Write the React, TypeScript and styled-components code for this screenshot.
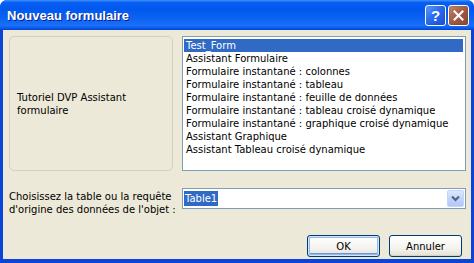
import React from "react";
import styled, { createGlobalStyle } from "styled-components";

const GlobalStyle = createGlobalStyle`
  html, body {
    margin: 0;
    padding: 0;
    background: #ffffff;
  }
  body {
    font-family: "DejaVu Sans", Verdana, sans-serif;
    font-size: 10px;
    color: #000;
  }
`;

const Window = styled.div`
  width: 474px;
  height: 263px;
  display: flex;
  flex-direction: column;
  background: #0a44d8;
  border-radius: 7px 7px 0 0;
  overflow: hidden;
  box-sizing: border-box;
`;

const TitleBar = styled.div`
  height: 30px;
  flex: none;
  display: flex;
  align-items: center;
  justify-content: space-between;
  padding: 0 5px 0 7px;
  background: linear-gradient(
    to bottom,
    #3d95ff 0%,
    #0a5ff4 8%,
    #0058ee 30%,
    #0a63f2 60%,
    #1a6ff8 85%,
    #0a5ae8 94%,
    #0340cf 100%
  );
`;

const Title = styled.span`
  font-family: "Liberation Sans", Arial, sans-serif;
  font-weight: bold;
  font-size: 13px;
  color: #ffffff;
  text-shadow: 1px 1px 0 #0a1e8a;
  margin-top: 1px;
`;

const Caption = styled.div`
  display: flex;
  gap: 2px;
  margin-top: 1px;
`;

const CaptionButton = styled.div<{ $tone: "help" | "close" }>`
  width: 19px;
  height: 19px;
  border: 1px solid #ffffff;
  border-radius: 3px;
  display: flex;
  align-items: center;
  justify-content: center;
  color: #ffffff;
  font-family: "Liberation Sans", Arial, sans-serif;
  font-weight: bold;
  font-size: 15px;
  background: ${(p) =>
    p.$tone === "help"
      ? "linear-gradient(135deg, #5f9cfb 0%, #2a6cf0 45%, #1a4fd8 100%)"
      : "linear-gradient(135deg, #c2876f 0%, #a25a43 50%, #8a4634 100%)"};
  box-shadow: inset 0 0 2px rgba(0, 0, 0, 0.25);
`;

const Client = styled.div`
  flex: 1;
  margin: 0 3px 4px 3px;
  background: #ece9d8;
  display: flex;
  flex-direction: column;
  padding: 6px 5px 0 6px;
  box-sizing: border-box;
`;

const TopRow = styled.div`
  display: flex;
  gap: 9px;
  height: 135px;
`;

const InfoPanel = styled.div`
  width: 164px;
  box-sizing: border-box;
  border: 1px solid #d3d0c0;
  border-radius: 5px;
  display: flex;
  align-items: center;
  padding: 0 7px;
  line-height: 13px;
`;

const ListBox = styled.div`
  flex: 1;
  background: #ffffff;
  border: 1px solid #7f9db9;
  padding: 2px 1px;
  box-sizing: border-box;
`;

const ListItem = styled.div<{ $selected?: boolean }>`
  height: 13px;
  line-height: 13px;
  padding-left: 2px;
  margin-right: 1px;
  white-space: nowrap;
  background: ${(p) => (p.$selected ? "#316ac5" : "transparent")};
  color: ${(p) => (p.$selected ? "#ffffff" : "#000000")};
`;

const SourceRow = styled.div`
  display: flex;
  align-items: flex-start;
  gap: 9px;
  margin-top: 17px;
`;

const SourceLabel = styled.div`
  width: 164px;
  line-height: 13px;
  padding-top: 2px;
  white-space: nowrap;
`;

const Combo = styled.div`
  flex: 1;
  height: 21px;
  box-sizing: border-box;
  border: 1px solid #7f9db9;
  background: #ffffff;
  display: flex;
  align-items: center;
  padding: 0 1px;
`;

const ComboValue = styled.div`
  flex: 1;
  display: flex;
`;

const Selected = styled.span`
  background: #316ac5;
  color: #ffffff;
  line-height: 15px;
  padding: 0 1px;
`;

const DropButton = styled.div`
  width: 17px;
  height: 17px;
  border-radius: 2px;
  background: linear-gradient(to bottom, #dce8fd 0%, #c3d5fb 50%, #b3c8f6 100%);
  border: 1px solid #c2d3fc;
  box-sizing: border-box;
  display: flex;
  align-items: center;
  justify-content: center;
`;

const ButtonRow = styled.div`
  display: flex;
  justify-content: flex-end;
  gap: 9px;
  margin-top: 19px;
  padding-right: 4px;
`;

const PushButton = styled.div<{ $default?: boolean }>`
  width: 73px;
  height: 22px;
  box-sizing: border-box;
  border: 1px solid #003c74;
  border-radius: 3px;
  display: flex;
  align-items: center;
  justify-content: center;
  background: linear-gradient(to bottom, #ffffff 0%, #f4f3ee 60%, #e3e1d6 100%);
  box-shadow: ${(p) =>
    p.$default
      ? "inset 0 0 0 1px #cee7ff, inset 0 0 0 2px #98b8ea, inset 0 -1px 0 2px #6c95dc"
      : "inset 0 -1px 0 0 #d6d0c5"};
`;

const items = [
  "Test_Form",
  "Assistant Formulaire",
  "Formulaire instantané : colonnes",
  "Formulaire instantané : tableau",
  "Formulaire instantané : feuille de données",
  "Formulaire instantané : tableau croisé dynamique",
  "Formulaire instantané : graphique croisé dynamique",
  "Assistant Graphique",
  "Assistant Tableau croisé dynamique",
];

export default function App() {
  return (
    <>
      <GlobalStyle />
      <Window>
        <TitleBar>
          <Title>Nouveau formulaire</Title>
          <Caption>
            <CaptionButton $tone="help">?</CaptionButton>
            <CaptionButton $tone="close">
              <svg width="11" height="11" viewBox="0 0 11 11">
                <path
                  d="M1.5 1.5 L9.5 9.5 M9.5 1.5 L1.5 9.5"
                  stroke="#ffffff"
                  strokeWidth="2"
                  strokeLinecap="square"
                />
              </svg>
            </CaptionButton>
          </Caption>
        </TitleBar>
        <Client>
          <TopRow>
            <InfoPanel>Tutoriel DVP Assistant formulaire</InfoPanel>
            <ListBox>
              {items.map((it, i) => (
                <ListItem key={it} $selected={i === 0}>
                  {it}
                </ListItem>
              ))}
            </ListBox>
          </TopRow>
          <SourceRow>
            <SourceLabel>
              Choisissez la table ou la requête
              <br />
              d'origine des données de l'objet :
            </SourceLabel>
            <Combo>
              <ComboValue>
                <Selected>Table1</Selected>
              </ComboValue>
              <DropButton>
                <svg width="9" height="7" viewBox="0 0 9 7">
                  <path
                    d="M1 1.5 L4.5 5 L8 1.5"
                    fill="none"
                    stroke="#4d6185"
                    strokeWidth="2"
                  />
                </svg>
              </DropButton>
            </Combo>
          </SourceRow>
          <ButtonRow>
            <PushButton $default>OK</PushButton>
            <PushButton>Annuler</PushButton>
          </ButtonRow>
        </Client>
      </Window>
    </>
  );
}
